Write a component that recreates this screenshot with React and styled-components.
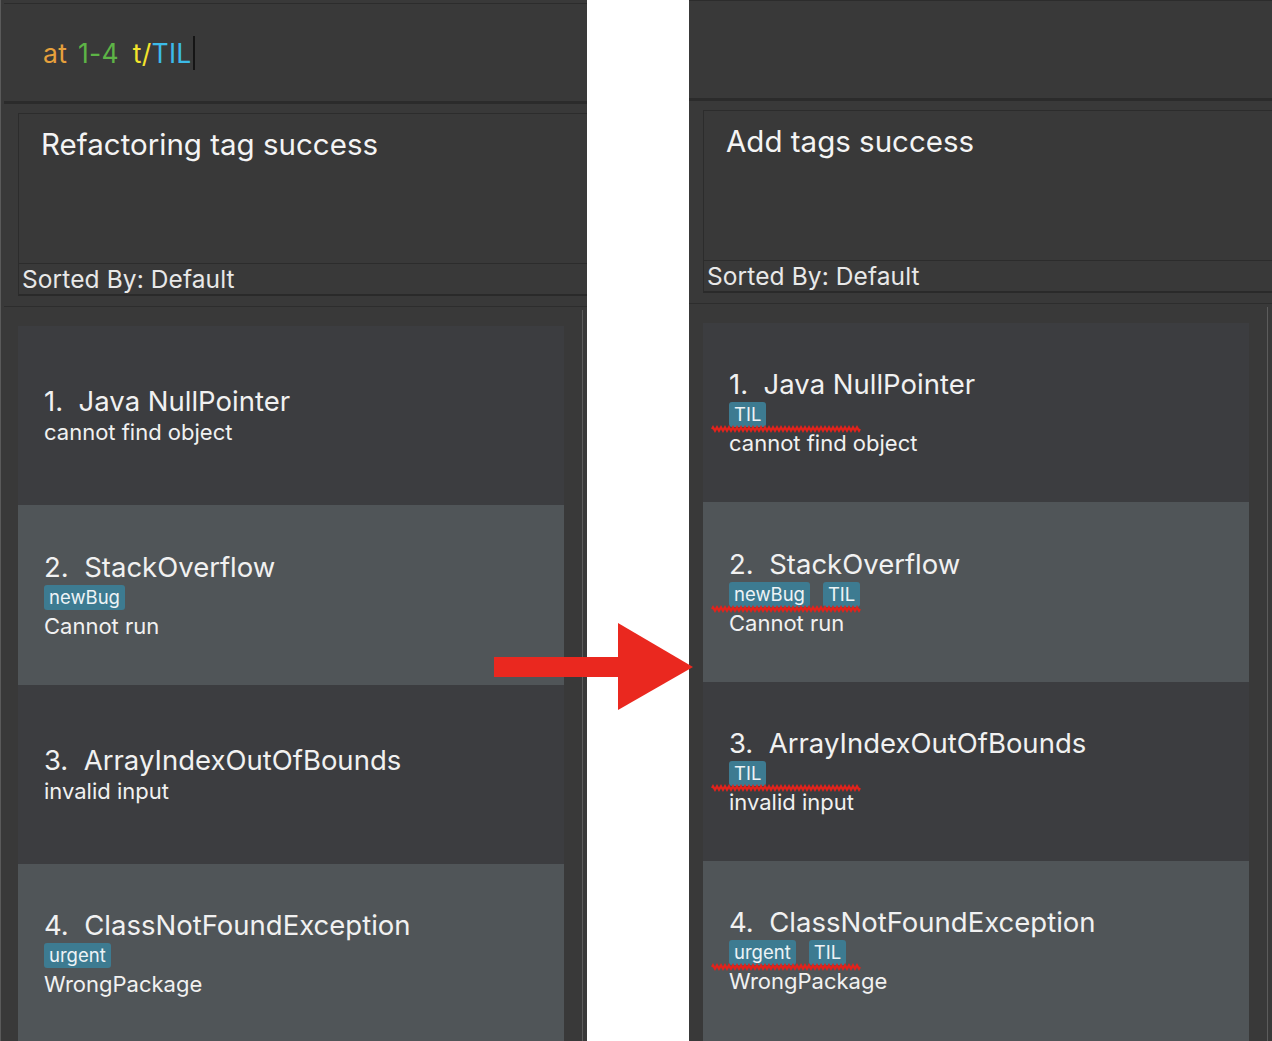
import React from "react";
import styled, { createGlobalStyle } from "styled-components";

const GlobalStyle = createGlobalStyle`
  html, body { margin: 0; padding: 0; background: #ffffff; }
  body { font-family: Inter, "Noto Sans", Arial, sans-serif; }
  * { box-sizing: border-box; }
`;

const Stage = styled.div`
  position: relative;
  width: 1272px;
  height: 1041px;
  overflow: hidden;
  display: flex;
  gap: 102px;
  background: #ffffff;
`;

const Window = styled.div`
  flex-shrink: 0;
  width: ${(p) => p.$width}px;
  height: 100%;
  padding: ${(p) => p.$inset}px 0 0 ${(p) => p.$inset}px;
  border-left: ${(p) => (p.$edge ? "1px solid #5a5a5a" : "none")};
  background: #393939;
  display: flex;
  flex-direction: column;
  overflow: hidden;
`;

const CommandBox = styled.div`
  height: 101px;
  flex-shrink: 0;
  border-top: 1px solid #2c2c2c;
  border-bottom: 3px solid #2b2b2b;
  display: flex;
  align-items: center;
  padding-left: 39px;
  font-size: 26.5px;
  letter-spacing: 0.3px;
`;

const Word = styled.span`
  color: ${(p) => p.$color};
  white-space: pre;
  margin-right: ${(p) => p.$space || 0}px;
`;

const Caret = styled.span`
  display: inline-block;
  width: 2px;
  height: 34px;
  background: #151515;
  margin-left: 1px;
`;

const ResultSection = styled.div`
  flex-shrink: 0;
  padding: 9px 0 10px 14px;
  border-bottom: 1px solid #2d2d2d;
`;

const ResultBox = styled.div`
  border-top: 1px solid #2c2c2c;
  border-left: 1px solid #2c2c2c;
  border-bottom: 2px solid #2a2a2a;
`;

const ResultText = styled.div`
  height: 149px;
  padding: 13px 0 0 22px;
  font-size: 29.5px;
  line-height: 34px;
  color: #f4f4f4;
`;

const StatusBar = styled.div`
  height: 31px;
  border-top: 1px solid #2c2c2c;
  padding-left: 3px;
  font-size: 24.5px;
  line-height: 30px;
  color: #e8e8e8;
  letter-spacing: 0.1px;
`;

const ListArea = styled.div`
  flex: 1;
  display: flex;
  padding: 19px 0 0 14px;
  min-height: 0;
`;

const CardColumn = styled.div`
  width: 546px;
  flex-shrink: 0;
  display: flex;
  flex-direction: column;
`;

const ScrollTrack = styled.div`
  width: 1px;
  margin: -16px 0 0 18px;
  background: #5c5c5c;
`;

const Card = styled.div`
  height: 179.4px;
  flex-shrink: 0;
  background: ${(p) => (p.$alt ? "#505558" : "#3c3d40")};
  display: flex;
  flex-direction: column;
  justify-content: center;
  padding-left: 26px;
  color: #f1f1f1;
`;

const Title = styled.div`
  font-size: 27.5px;
  line-height: 30px;
  white-space: pre;
`;

const TagRow = styled.div`
  position: relative;
  display: flex;
  gap: 13px;
  margin-top: 3px;
`;

const Tag = styled.span`
  height: 25px;
  padding: 0 5px;
  border-radius: 3px;
  background: #3d7b91;
  color: #edf3f6;
  font-size: 18.5px;
  line-height: 25px;
`;

const Squiggle = styled.svg`
  position: absolute;
  left: -17px;
  top: 24px;
  width: 148px;
  height: 6px;
  overflow: visible;
`;

const Desc = styled.div`
  margin-top: 3px;
  font-size: 22px;
  line-height: 26px;
`;

const Arrow = styled.svg`
  position: absolute;
  left: 494px;
  top: 622px;
  width: 200px;
  height: 90px;
`;

const wave = (() => {
  let d = "M0 3";
  for (let x = 0; x < 148; x += 2) {
    d += ` L${x + 1} ${x % 4 === 0 ? 1.2 : 4.8} L${x + 2} 3`;
  }
  return d;
})();

function Entry({ index, title, tags, desc, alt, marked }) {
  return (
    <Card $alt={alt}>
      <Title>{`${index}.  ${title}`}</Title>
      {tags.length > 0 && (
        <TagRow>
          {tags.map((t) => (
            <Tag key={t}>{t}</Tag>
          ))}
          {marked && (
            <Squiggle viewBox="0 0 148 6" preserveAspectRatio="none">
              <path d={wave} fill="none" stroke="#e3231c" strokeWidth="2.2" />
            </Squiggle>
          )}
        </TagRow>
      )}
      <Desc>{desc}</Desc>
    </Card>
  );
}

function AppWindow({ width, inset, edge, command, message, entries, marked }) {
  return (
    <Window $width={width} $inset={inset} $edge={edge}>
      <CommandBox>{command}</CommandBox>
      <ResultSection>
        <ResultBox>
          <ResultText>{message}</ResultText>
          <StatusBar>Sorted By: Default</StatusBar>
        </ResultBox>
      </ResultSection>
      <ListArea>
        <CardColumn>
          {entries.map((e, i) => (
            <Entry key={e.title} index={i + 1} alt={i % 2 === 1} marked={marked} {...e} />
          ))}
        </CardColumn>
        <ScrollTrack />
      </ListArea>
    </Window>
  );
}

const before = [
  { title: "Java NullPointer", tags: [], desc: "cannot find object" },
  { title: "StackOverflow", tags: ["newBug"], desc: "Cannot run" },
  { title: "ArrayIndexOutOfBounds", tags: [], desc: "invalid input" },
  { title: "ClassNotFoundException", tags: ["urgent"], desc: "WrongPackage" },
];

const after = [
  { title: "Java NullPointer", tags: ["TIL"], desc: "cannot find object" },
  { title: "StackOverflow", tags: ["newBug", "TIL"], desc: "Cannot run" },
  { title: "ArrayIndexOutOfBounds", tags: ["TIL"], desc: "invalid input" },
  { title: "ClassNotFoundException", tags: ["urgent", "TIL"], desc: "WrongPackage" },
];

export default function App() {
  const command = (
    <>
      <Word $color="#e6a03c" $space={3}>at </Word>
      <Word $color="#5db446" $space={6}>1-4 </Word>
      <Word $color="#f3e32c">t/</Word>
      <Word $color="#3cbbe8">TIL</Word>
      <Caret />
    </>
  );
  return (
    <>
      <GlobalStyle />
      <Stage>
        <AppWindow
          width={587}
          inset={3}
          edge
          command={command}
          message="Refactoring tag success"
          entries={before}
        />
        <AppWindow width={583} inset={0} command={null} message="Add tags success" entries={after} marked />
        <Arrow viewBox="0 0 200 90">
          <rect x="0" y="35" width="128" height="20" fill="#ea281f" />
          <polygon points="124,1 124,88 199,45" fill="#ea281f" />
        </Arrow>
      </Stage>
    </>
  );
}
